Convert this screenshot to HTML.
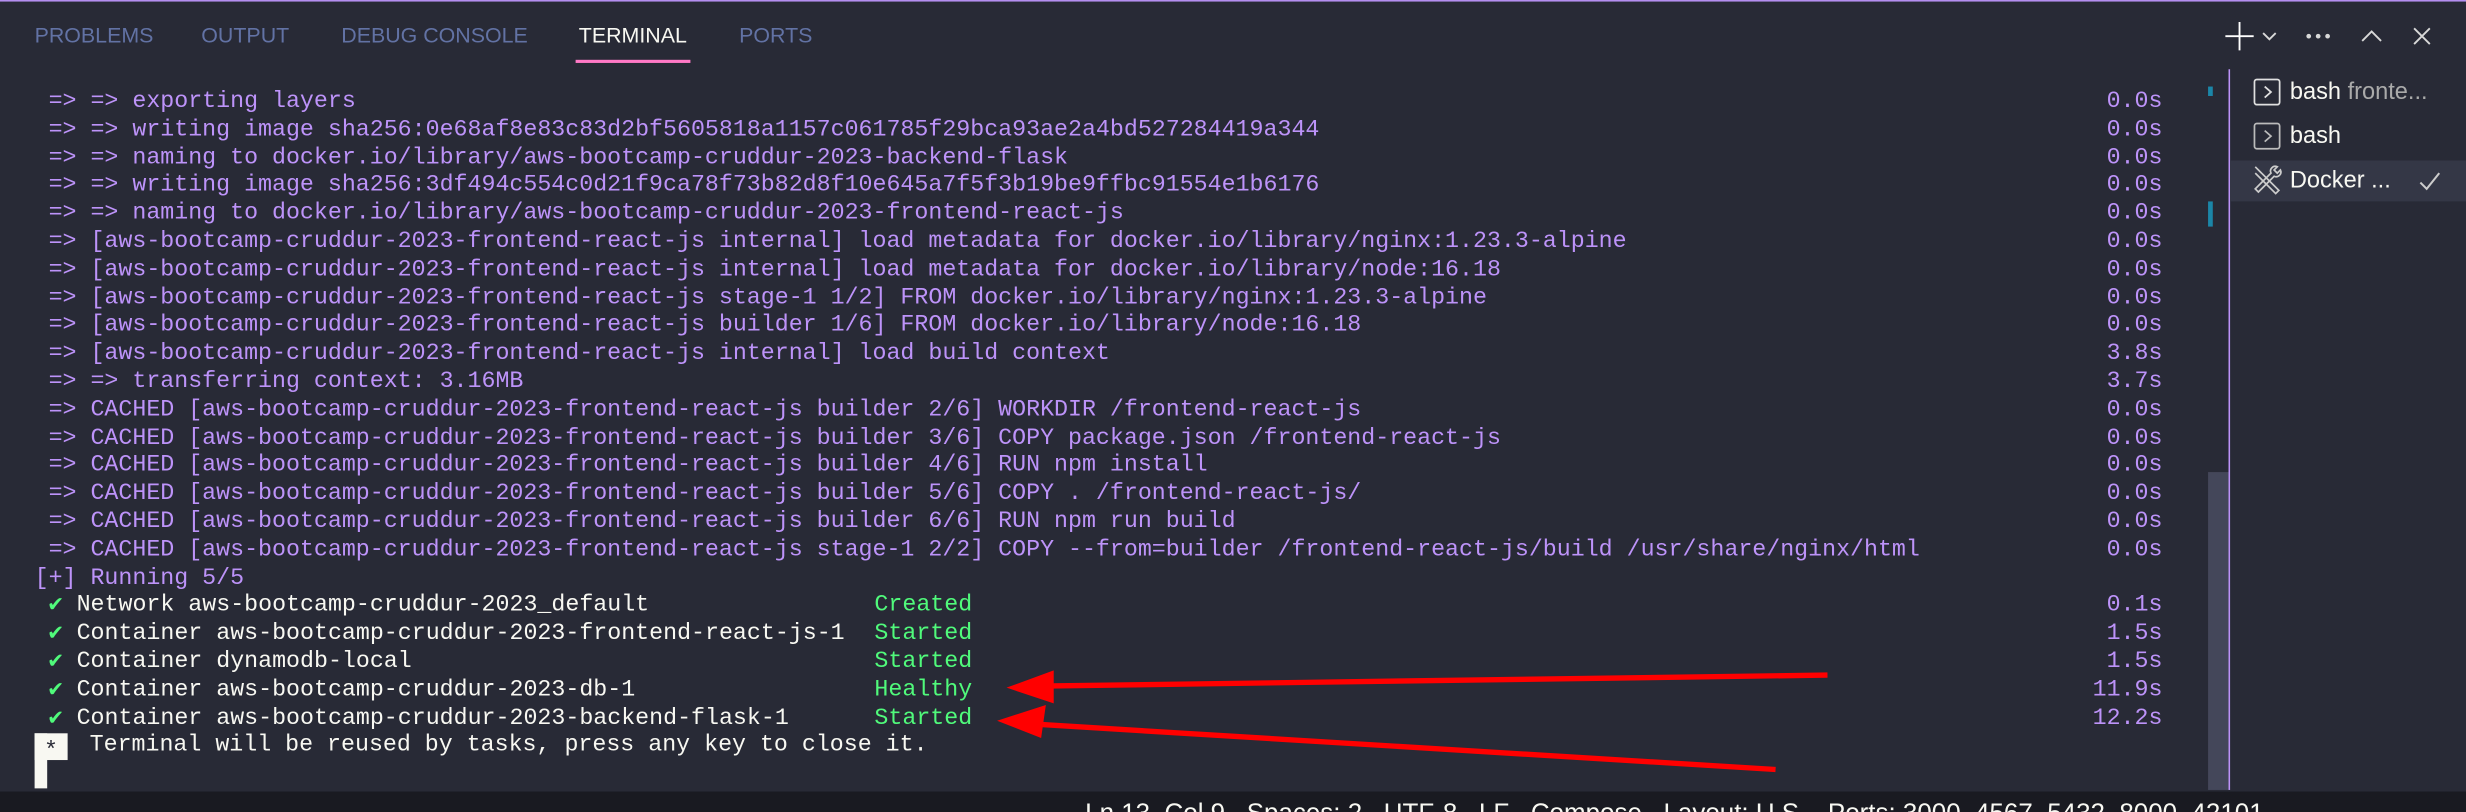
<!DOCTYPE html>
<html><head><meta charset="utf-8"><style>
html,body{margin:0;padding:0;background:#282a36;overflow:hidden;width:2466px;height:812px}
#s{position:absolute;left:0;top:0;width:1568px;height:516px;transform:scale(1.5727,1.5736);transform-origin:0 0;background:#282a36;overflow:hidden;font-family:"Liberation Sans",sans-serif}
.a{position:absolute;white-space:pre}
.tab{position:absolute;top:15px;font-size:13.6px;color:#6272a4;letter-spacing:0}
.t{position:absolute;font-family:"Liberation Mono",monospace;font-size:14.8px;line-height:17.8px;white-space:pre;color:#bd93f9}
.w{color:#f8f8f2}.g{color:#50fa7b}
.tm{position:absolute;left:1300px;width:75px;text-align:right;font-family:"Liberation Mono",monospace;font-size:14.8px;line-height:17.8px;color:#bd93f9}
</style></head><body><div id="s">
<div style="position:absolute;left:0;top:0;width:1568px;height:1.3px;background:#b48ef0"></div>
<div class="tab" style="left:22px">PROBLEMS</div>
<div class="tab" style="left:128px">OUTPUT</div>
<div class="tab" style="left:217px">DEBUG CONSOLE</div>
<div class="tab" style="left:368px;color:#f8f8f2">TERMINAL</div>
<div class="tab" style="left:470px">PORTS</div>
<div style="position:absolute;left:366px;top:38px;width:73px;height:2px;background:#ff79c6"></div>
<svg style="position:absolute;left:1410px;top:10px" width="150" height="26" viewBox="0 0 150 26" fill="none" stroke="#d8d8d8" stroke-width="1.2">
<path d="M14 4V22M5 13H23" stroke="#fff"/><path d="M29 11l4 4 4-4"/>
<circle cx="58" cy="13" r="0.9" fill="#d8d8d8"/><circle cx="64" cy="13" r="0.9" fill="#d8d8d8"/><circle cx="70" cy="13" r="0.9" fill="#d8d8d8"/>
<path d="M92 16l6-6 6 6"/><path d="M125 8l10 10M135 8l-10 10"/></svg>
<div id="lines"></div>
<div style="position:absolute;left:1404px;top:300px;width:13px;height:202px;background:#44475a"></div>
<div style="position:absolute;left:1404px;top:55px;width:3px;height:6px;background:#1b86a8"></div>
<div style="position:absolute;left:1404px;top:128px;width:3px;height:16px;background:#1b86a8"></div>
<div style="position:absolute;left:1417px;top:44px;width:1px;height:458px;background:#bd93f9"></div>
<div style="position:absolute;left:1418px;top:102px;width:150px;height:26px;background:#343746"></div>
<svg style="position:absolute;left:1430px;top:48px" width="138" height="80" viewBox="0 0 138 80" fill="none" stroke="#e0e0e0" stroke-width="1.1">
<rect x="3.5" y="2.5" width="16" height="16" rx="1.5"/><path d="M10 7l4 3.5-4 3.5"/>
<rect x="3.5" y="30.5" width="16" height="16" rx="1.5" stroke="#bbb"/><path d="M10 35l4 3.5-4 3.5" stroke="#bbb"/>
<path d="M4 58l4 4M6 60l13 13l-2 2L4 62M18 58a3 3 0 0 0-4 4L4 72l2 2 10-10a3 3 0 0 0 4-4l-2 2-2-2z" stroke="#ccc"/>
<path d="M109 68l4 4 8-10" stroke="#ccc" stroke-width="1.3"/></svg>
<div class="a" style="left:1456px;top:50px;font-size:15px;color:#f8f8f2">bash <span style="color:#aaa">fronte...</span></div>
<div class="a" style="left:1456px;top:78px;font-size:15px;color:#f8f8f2">bash</div>
<div class="a" style="left:1456px;top:106px;font-size:15px;color:#f8f8f2">Docker ...</div>
<div style="position:absolute;left:21.5px;top:466px;width:21px;height:17px;background:#f8f8f2"></div>
<div style="position:absolute;left:21.5px;top:466px;width:8.5px;height:35px;background:#f8f8f2"></div>
<div class="t" style="left:28px;top:470px;color:#282a36">*</div>
<svg style="position:absolute;left:0;top:0" width="1568" height="516">
<path d="M1162 429L662 436" stroke="#f00" stroke-width="3.4"/><path d="M640 437L670 426L670 447Z" fill="#f00"/>
<path d="M1129 489L655 460" stroke="#f00" stroke-width="3.4"/><path d="M634 458L665 448L662 469Z" fill="#f00"/></svg>
<div style="position:absolute;left:0;top:503px;width:1568px;height:13px;background:#191a21"></div>
<div class="a" style="left:690px;top:508px;font-size:16.5px;color:#f8f8f2">Ln 13, Col 9   Spaces: 2   UTF-8   LF   Compose   Layout: U.S.   Ports: 3000, 4567, 5432, 8000, 42101</div>
</div>
<script>
const P='aws-bootcamp-cruddur-2023-frontend-react-js';
const L=[
[' => => exporting layers','0.0s'],
[' => => writing image sha256:0e68af8e83c83d2bf5605818a1157c061785f29bca93ae2a4bd527284419a344','0.0s'],
[' => => naming to docker.io/library/aws-bootcamp-cruddur-2023-backend-flask','0.0s'],
[' => => writing image sha256:3df494c554c0d21f9ca78f73b82d8f10e645a7f5f3b19be9ffbc91554e1b6176','0.0s'],
[' => => naming to docker.io/library/aws-bootcamp-cruddur-2023-frontend-react-js','0.0s'],
[' => ['+P+' internal] load metadata for docker.io/library/nginx:1.23.3-alpine','0.0s'],
[' => ['+P+' internal] load metadata for docker.io/library/node:16.18','0.0s'],
[' => ['+P+' stage-1 1/2] FROM docker.io/library/nginx:1.23.3-alpine','0.0s'],
[' => ['+P+' builder 1/6] FROM docker.io/library/node:16.18','0.0s'],
[' => ['+P+' internal] load build context','3.8s'],
[' => => transferring context: 3.16MB','3.7s'],
[' => CACHED ['+P+' builder 2/6] WORKDIR /frontend-react-js','0.0s'],
[' => CACHED ['+P+' builder 3/6] COPY package.json /frontend-react-js','0.0s'],
[' => CACHED ['+P+' builder 4/6] RUN npm install','0.0s'],
[' => CACHED ['+P+' builder 5/6] COPY . /frontend-react-js/','0.0s'],
[' => CACHED ['+P+' builder 6/6] RUN npm run build','0.0s'],
[' => CACHED ['+P+' stage-1 2/2] COPY --from=builder /frontend-react-js/build /usr/share/nginx/html','0.0s'],
['[+] Running 5/5',''],
['C Network aws-bootcamp-cruddur-2023_default','0.1s','Created'],
['C Container aws-bootcamp-cruddur-2023-frontend-react-js-1','1.5s','Started'],
['C Container dynamodb-local','1.5s','Started'],
['C Container aws-bootcamp-cruddur-2023-db-1','11.9s','Healthy'],
['C Container aws-bootcamp-cruddur-2023-backend-flask-1','12.2s','Started']];
let h='';
L.forEach((l,i)=>{const y=(57+i*17.8).toFixed(1);
let txt=l[0].replace(/&/g,'&amp;').replace(/</g,'&lt;').replace(/>/g,'&gt;');
if(l[2]){txt=' <span class="g">✔</span><span class="w">'+txt.slice(1)+'</span>';
h+='<div class="t g" style="left:556px;top:'+y+'px">'+l[2]+'</div>';}
h+='<div class="t" style="left:22px;top:'+y+'px">'+txt+'</div>';
if(l[1])h+='<div class="tm" style="top:'+y+'px">'+l[1]+'</div>';});
h+='<div class="t w" style="left:57px;top:'+(57+23*17.8).toFixed(1)+'px">Terminal will be reused by tasks, press any key to close it.</div>';
document.getElementById('lines').innerHTML=h;
</script>
</body></html>
